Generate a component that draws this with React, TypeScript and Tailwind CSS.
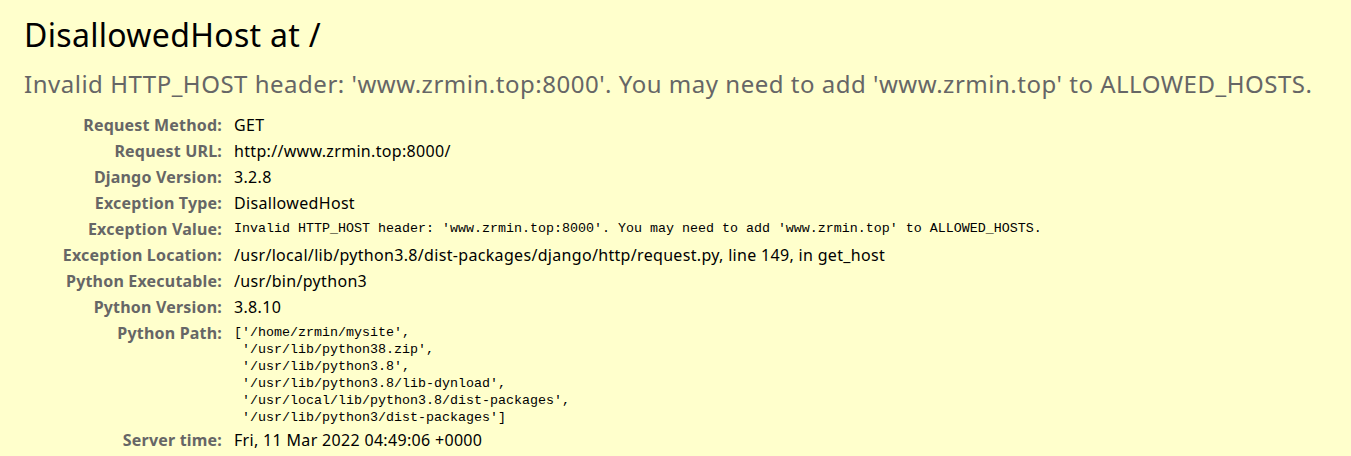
const meta: [string, string, boolean?][] = [
  ["Request Method:", "GET"],
  ["Request URL:", "http://www.zrmin.top:8000/"],
  ["Django Version:", "3.2.8"],
  ["Exception Type:", "DisallowedHost"],
  [
    "Exception Value:",
    "Invalid HTTP_HOST header: 'www.zrmin.top:8000'. You may need to add 'www.zrmin.top' to ALLOWED_HOSTS.",
    true,
  ],
  ["Exception Location:", "/usr/local/lib/python3.8/dist-packages/django/http/request.py, line 149, in get_host"],
  ["Python Executable:", "/usr/bin/python3"],
  ["Python Version:", "3.8.10"],
];

const pythonPath = [
  "['/home/zrmin/mysite',",
  " '/usr/lib/python38.zip',",
  " '/usr/lib/python3.8',",
  " '/usr/lib/python3.8/lib-dynload',",
  " '/usr/local/lib/python3.8/dist-packages',",
  " '/usr/lib/python3/dist-packages']",
];

const mono = "font-['Liberation_Mono',monospace] text-[13.33px] tracking-normal";
const th = "py-[2px] text-right font-bold leading-[22px] tracking-[0.012em] text-[#666]";

export default function App() {
  return (
    <div className="min-h-screen bg-[#ffffcc] font-['Noto_Sans',sans-serif] tracking-[0.02em] text-black">
      <div className="px-[24px] pt-[14px]">
        <h1 className="text-[32px] leading-[42px] font-normal">DisallowedHost at /</h1>
        <h2 className="mt-[12px] text-[24px] leading-[32px] font-normal tracking-[0.0215em] text-[#666]">
          Invalid HTTP_HOST header: 'www.zrmin.top:8000'. You may need to add 'www.zrmin.top' to
          ALLOWED_HOSTS.
        </h2>
        <div className="mt-[12px] grid grid-cols-[198px_1fr] gap-x-[12px] text-[16px]">
          {meta.map(([label, value, isMono]) => (
            <div key={label} className="contents">
              <div className={th}>{label}</div>
              <div className={`py-[2px] leading-[22px] ${isMono ? mono : ""}`}>{value}</div>
            </div>
          ))}
          <div className={th}>Python Path:</div>
          <pre className={`pt-[4px] pb-[1px] leading-[17px] ${mono}`}>{pythonPath.join("\n")}</pre>
          <div className={th}>Server time:</div>
          <div className="py-[2px] leading-[22px]">Fri, 11 Mar 2022 04:49:06 +0000</div>
        </div>
      </div>
    </div>
  );
}
